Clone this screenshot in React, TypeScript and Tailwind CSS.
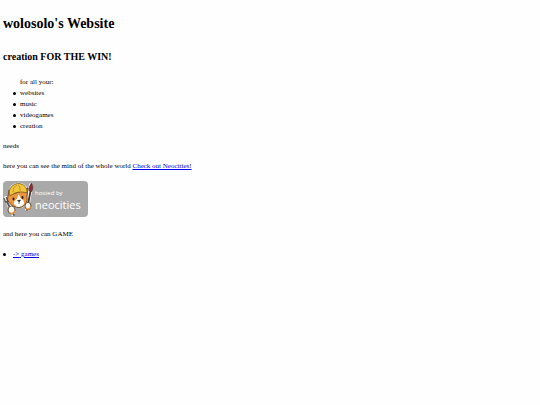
import type { ReactNode } from 'react';

const topics = ['websites', 'music', 'videogames', 'creation'];

function Bullet(): ReactNode {
  return <span aria-hidden="true" className="h-[3px] w-[3px] shrink-0 rounded-full bg-black" />;
}

// Mascot with a helmet, a fork in one paw and a brush in the other.
function NeocitiesBadge(): ReactNode {
  return (
    <svg width="85" height="36" viewBox="0 0 85 36" role="img" aria-label="hosted by neocities">
      <rect width="85" height="36" rx="4" fill="#a9a9a9" />
      <g stroke="#fff" strokeWidth="4" strokeLinecap="round" strokeLinejoin="round" fill="#fff">
        <path d="M3 17 L10 33" />
        <path d="M28 4 L24 28" />
        <path d="M8 10 C9 3 18 2 22 7 C25 12 24 21 20 24 C14 26 8 24 6 19 Z" />
      </g>
      <path d="M4 21 L11 34" stroke="#555" strokeWidth="1.8" strokeLinecap="round" />
      <path d="M1 17 L2.5 21 L6.5 20 L5.5 15.500 M3.2 16 L4.500 20" fill="none" stroke="#555" strokeWidth="1.2" />
      <path d="M27.5 10 L24 29" stroke="#4a3527" strokeWidth="1.8" strokeLinecap="round" />
      <path d="M28.500 2 C30.500 5 30 9 28 11 L26 9.5 C26 6 27 4 28.5 2 Z" fill="#9b2635" stroke="#432" strokeWidth=".7" />
      <path d="M6 9 L4.500 18 C5 22 10 26.5 16 26.5 C22 26 25 21 24 16 L25 7 L19 10 L10 13 Z" fill="#eb963f" stroke="#4a301a" strokeWidth=".8" />
      <path d="M15.500 13 L14 18 C10 20 10 24 14 25.8 C19 26.5 22.500 23 20.5 19.500 L17.5 17 Z" fill="#fff" />
      <path d="M7 15 C4 8 10 2.5 15.5 2.500 C21 2.5 24.5 7 24 12 C18 10 12 11 7 15 Z" fill="#f2c63c" stroke="#73551b" strokeWidth=".8" />
      <path d="M10 11 C10 7 12 5 14 4 M17 10 C17 7 17 5 15 4" fill="none" stroke="#b58624" strokeWidth=".8" />
      <ellipse cx="10.500" cy="18" rx="1" ry="1.4" fill="#251b15" />
      <ellipse cx="19.5" cy="16.500" rx="1" ry="1.4" fill="#251b15" />
      <path d="M14.5 19.5 L17.5 19 L16.3 21 Z M16 21 V23" fill="#251b15" stroke="#251b15" strokeWidth=".6" />
      <ellipse cx="8.5" cy="29" rx="3.5" ry="4" fill="#fffaf0" stroke="#4a301a" strokeWidth=".8" />
      <path d="M6 31 C8 33 10 33 12 30" fill="none" stroke="#eb963f" strokeWidth="1.4" />
      <ellipse cx="25" cy="25" rx="3" ry="3.7" fill="#fffaf0" stroke="#4a301a" strokeWidth=".8" />
      <path d="M23 27 C25 29 26 28 28 26" fill="none" stroke="#eb963f" strokeWidth="1.4" />
      <text x="32" y="14" fill="#fff" className="font-['Open_Sans',sans-serif] text-[6px]">hosted by</text>
      <text x="32" y="28" fill="#fff" className="font-['Open_Sans',sans-serif] text-[11px] font-medium">neocities</text>
    </svg>
  );
}

export default function App(): ReactNode {
  return (
    <main className="min-h-screen bg-[#fefefe] px-[3px] pt-[13px] font-['Liberation_Serif',serif] text-[7px] leading-[11px] text-black">
      <h1 className="text-[14px] leading-[22px] font-bold">wolosolo's Website</h1>
      <h2 className="mt-[14px] text-[10px] leading-[16px] font-bold">creation FOR THE WIN!</h2>
      <div className="mt-3 pl-[10px]">
        <p className="pl-[7px]">for all your:</p>
        <ul>
          {topics.map((topic) => (
            <li key={topic} className="flex items-center gap-1">
              <Bullet />
              {topic}
            </li>
          ))}
        </ul>
      </div>
      <p className="mt-[9px]">needs</p>
      <p className="mt-[9px]">
        here you can see the mind of the whole world{' '}
        <a href="#neocities" className="text-[#0000ee] underline">Check out Neocities!</a>
      </p>
      <a href="#neocities" className="mt-[9px] block w-fit">
        <NeocitiesBadge />
      </a>
      <p className="mt-3">and here you can GAME</p>
      <ul className="mt-[9px]">
        <li className="flex items-center gap-[7px]">
          <Bullet />
          <a href="#games" className="text-[#0000ee] underline">{'->'} games</a>
        </li>
      </ul>
    </main>
  );
}
